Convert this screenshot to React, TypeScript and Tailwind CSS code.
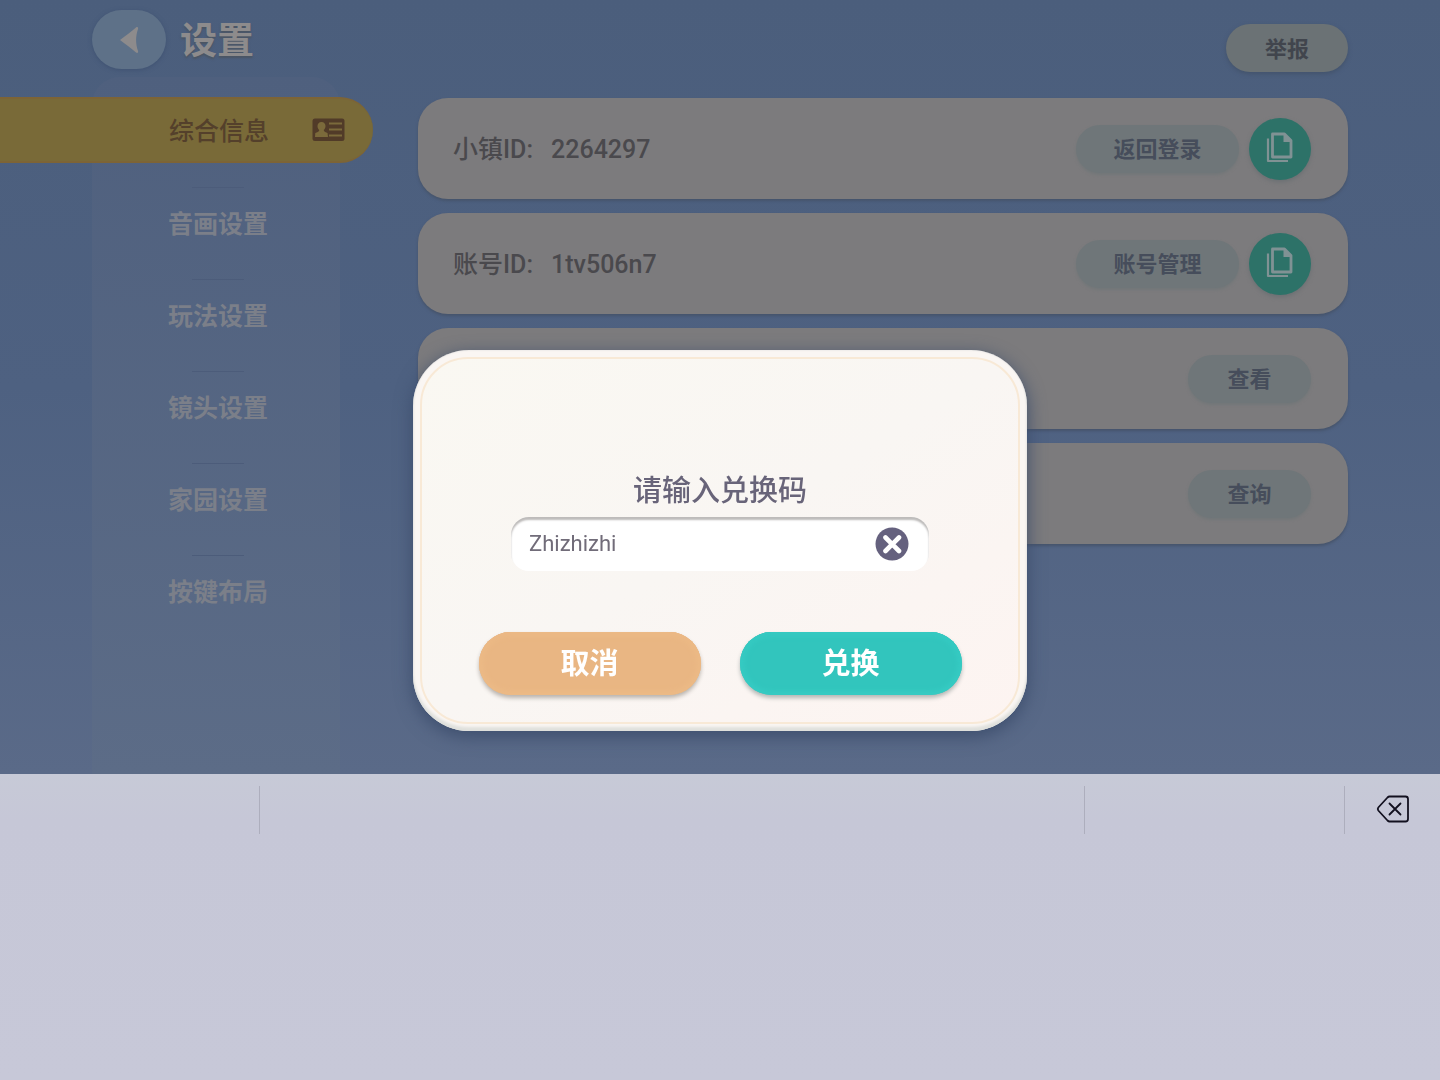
import { useState } from "react"

const menu = ["音画设置", "玩法设置", "镜头设置", "家园设置", "按键布局"]

const rows = [
    { label: "小镇ID:", value: "2264297", action: "返回登录", copy: true },
    { label: "账号ID:", value: "1tv506n7", action: "账号管理", copy: true },
    { label: "", value: "", action: "查看", copy: false },
    { label: "", value: "", action: "查询", copy: false },
]

function BackIcon() {
    return <svg viewBox="0 0 20 28" className="mr-px h-7 w-5" aria-hidden="true">
        <path d="M1 14 C6 10 12 6 17 1.500 C18.500 0.500 19.500 1.500 19 3 C16.500 10 16.500 18 19 25 C19.500 26.500 18.500 27.500 17 26.500 C12 22 6 18 1 14 Z" fill="#8d8b8c" />
    </svg>
}

function CardIcon() {
    return <svg viewBox="0 0 33 24" className="h-6 w-[33px]" aria-hidden="true">
        <rect x="0.500" y="0.500" width="32" height="22.500" rx="2.500" fill="#513b28" />
        <path d="M9.500 4 C12 4 13.500 5.700 13.500 8 C13.500 9.800 12.800 11.200 11.800 12 C11.800 13.500 12.500 13.800 15.500 15 L16 19 H3 L3.300 15 C6.500 13.800 7.200 13.500 7.200 12 C6.200 11.200 5.500 9.800 5.500 8 C5.500 5.700 7 4 9.500 4 Z" fill="#7b6a3b" />
        <path d="M17 5.500 H30 M17 11.500 H30 M17 17.500 H30" stroke="#7b6a3b" strokeWidth="2.200" />
    </svg>
}

function CopyIcon() {
    return <svg viewBox="0 0 28 32" className="-mt-1 h-8 w-7" fill="none" aria-hidden="true">
        <path d="M6.500 3 H18.500 L25 9.500 V26 H6.500 Z" stroke="#809294" strokeWidth="2.800" strokeLinejoin="round" />
        <path d="M17.500 2.500 L26 11 H17.500 Z" fill="#809294" />
        <path d="M2 7.500 V30 H22" stroke="#809294" strokeWidth="2.200" strokeLinejoin="round" />
    </svg>
}

function DeleteIcon() {
    return <svg viewBox="0 0 34 28" className="h-7 w-[34px]" fill="none" stroke="#12101f" strokeWidth="1.800" strokeLinecap="round" strokeLinejoin="round" aria-hidden="true">
        <path d="M13.500 1.500 H29.500 Q32 1.500 32 4 V24 Q32 26.500 29.500 26.500 H13.500 Q12.500 26.500 11.500 25.500 L2.300 15.500 Q1.200 14 2.300 12.500 L11.500 2.500 Q12.500 1.500 13.500 1.500 Z" />
        <path d="M13.500 8.500 L24.500 19.500 M24.500 8.500 L13.500 19.500" />
    </svg>
}

function Header() {
    return <header className="flex h-[77px] items-start justify-between px-[92px]">
        <div className="flex items-start gap-[14px] pt-[10px]">
            <button aria-label="返回" className="flex h-[59px] w-[74px] items-center justify-center rounded-full bg-[#5e7188] shadow-[0_1px_4px_#3f5272]">
                <BackIcon />
            </button>
            <h1 className="pt-[2px] text-[37px] leading-[59px] font-bold text-[#8d8b8c] [text-shadow:0_2px_2px_#4b5563]">设置</h1>
        </div>
        <button className="mt-6 h-12 w-[122px] rounded-full bg-[#6b7275] pt-[2px] text-[22px] font-bold text-[#41454d] shadow-[0_2px_4px_#43536c]">举报</button>
    </header>
}

function Sidebar() {
    return <nav className="w-[373px] shrink-0 pl-[92px]">
        <ul className="w-[248px] rounded-t-[28px] bg-linear-to-b from-[#4f607e] to-[#5c6c87] pt-5 pb-[137px]">
            <li className="-ml-[92px] mb-[14px] w-[373px]">
                <a href="#info" className="flex h-[66px] items-center rounded-r-full border-y-2 border-[#7d6436] bg-[#796a38] pl-[169px] text-[25px] font-medium text-[#54402b]">
                    <span className="pt-1">综合信息</span>
                    <span className="ml-[43px]"><CardIcon /></span>
                </a>
            </li>
            {menu.map((item) => (
                <li key={item} className="flex h-[92px] flex-col items-center pt-[10px] pl-1">
                    <span className="h-px w-[52px] bg-[#4c5c7a]"></span>
                    <a href="#" className="mt-[19px] text-[25px] leading-9 font-bold text-[#7b7f89]">{item}</a>
                </li>
            ))}
        </ul>
    </nav>
}

function Panel() {
    return <main className="ml-[45px] flex flex-1 flex-col gap-[14px] pt-[21px] pr-[92px]">
        {rows.map((row) => (
            <section key={row.action} className="flex h-[101px] items-center justify-between rounded-[30px] bg-[#7c7b7d] pr-[37px] pl-[35px] shadow-[0_2px_3px_#46546b]">
                <p className="flex items-center gap-[18px] pt-[3px] text-[25px] font-medium text-[#4a494d]">
                    <span>{row.label}</span>
                    <span>{row.value}</span>
                </p>
                <div className="flex items-center gap-[10px]">
                    <button className={`h-12 rounded-full bg-[#6f7679] pt-[2px] text-[22px] font-bold text-[#464d5b] shadow-[0_2px_3px_#727779] ${row.copy ? "w-[163px]" : "w-[123px]"}`}>{row.action}</button>
                    {row.copy && <button aria-label="复制" className="flex size-[62px] items-center justify-center rounded-full bg-[#2d7268] shadow-[0_2px_4px_#6b7073]">
                        <CopyIcon />
                    </button>}
                </div>
            </section>
        ))}
    </main>
}

function RedeemDialog() {
    const [code, setCode] = useState("Zhizhizhi")
    return <div className="fixed inset-0 flex items-center justify-center">
        <div role="dialog" aria-labelledby="redeem-title" className="w-[614px] rounded-[56px] bg-[#faf6f3] p-[7px] shadow-[inset_0_-4px_3px_#dfe0dc,inset_0_0_2px_#d8d8d8,0_5px_18px_#3c4d6c]">
            <div className="flex flex-col items-center rounded-[48px] border-2 border-[#f8e9d6] bg-linear-to-br from-[#faf8f2] via-[#f9f6f3] to-[#fdf4f1] pt-[112px] pb-[27px]">
                {/* code input */}
                <label id="redeem-title" htmlFor="code" className="text-[29px] leading-10 font-medium text-[#686479]">请输入兑换码</label>
                <div className="mt-[6px] flex h-[54px] w-[418px] items-center rounded-[18px] bg-white pr-5 pl-[18px] shadow-[inset_0_3px_2px_#bdbbba]">
                    <input id="code" value={code} onChange={(e) => setCode(e.target.value)} className="min-w-0 flex-1 bg-transparent text-[22px] text-[#716c79] outline-none" />
                    <button aria-label="清除" onClick={() => setCode("")} className="shrink-0">
                        <svg viewBox="0 0 34 34" className="size-[34px]">
                            <circle cx="17" cy="17" r="16.500" fill="#65617e" />
                            <path d="M10.500 10.500 L24 24 M24 10.500 L10.500 24" stroke="#fff" strokeWidth="4.600" strokeLinecap="round" />
                        </svg>
                    </button>
                </div>
                {/* actions */}
                <div className="mt-[61px] flex gap-[39px] text-[29px] font-bold text-white">
                    <button className="h-[63px] w-[222px] rounded-full bg-[#e9b683] pt-1 shadow-[inset_0_0_5px_4px_#ecba86,inset_0_2px_2px_#e6ad7c,0_3px_4px_#b9b3ad]">取消</button>
                    <button className="h-[63px] w-[222px] rounded-full bg-[#32c5bd] pt-1 shadow-[inset_0_0_5px_4px_#36cbc3,inset_0_2px_2px_#2bbab2,0_3px_4px_#b3b7b5]">兑换</button>
                </div>
            </div>
        </div>
    </div>
}

function Keyboard() {
    return <footer className="flex-1 bg-linear-to-b from-[#c7cad7] via-[#c6c7d7] via-15% to-[#c7c8d8]">
        <div className="grid grid-cols-[260px_1fr_260px_95px] pt-3">
            <span className="h-12 border-r border-[#adaebd]"></span>
            <span className="h-12 border-r border-[#adaebd]"></span>
            <span className="h-12 border-r border-[#adaebd]"></span>
            <button aria-label="删除" className="flex h-[46px] items-center justify-center"><DeleteIcon /></button>
        </div>
    </footer>
}

export default function App() {
    return <div className="flex min-h-screen flex-col font-[Roboto,'Noto_Sans_CJK_SC',sans-serif]">
        <div className="bg-linear-to-b from-[#4b5e7c] via-[#4e6181] to-[#5a6a88]">
            <Header />
            <div className="flex">
                <Sidebar />
                <Panel />
            </div>
        </div>
        <Keyboard />
        <RedeemDialog />
    </div>
}
